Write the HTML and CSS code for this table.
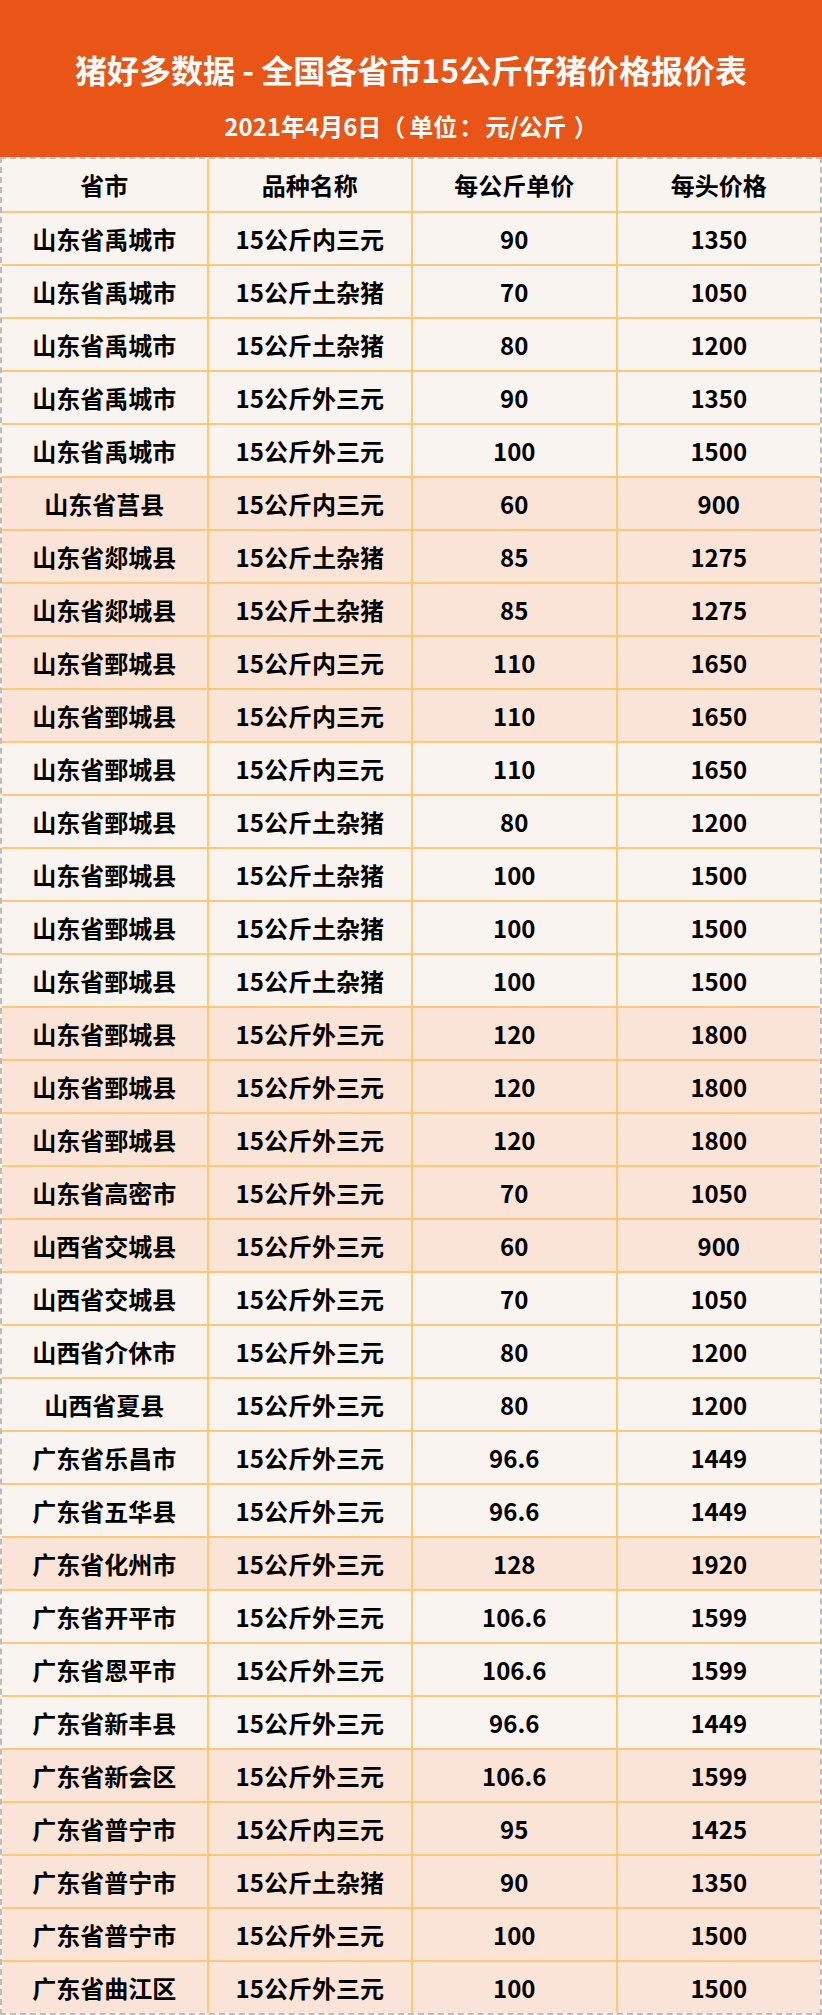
FILE: index.html
```html
<!DOCTYPE html>
<html lang="zh-CN">
<head>
<meta charset="utf-8">
<title>猪好多数据 - 全国各省市15公斤仔猪价格报价表</title>
<link rel="stylesheet" href="styles.css">
</head>
<body>
<div class="page">
  <header class="banner">
    <h1 class="title">猪好多数据 - 全国各省市15公斤仔猪价格报价表</h1>
    <p class="subtitle">2021年4月6日<span class="p-open">（</span>单位<span class="p-colon">：</span>元/公斤<span class="p-close">）</span></p>
  </header>
  <div class="table">
    <div class="row head"><div class="cell">省市</div><div class="cell">品种名称</div><div class="cell">每公斤单价</div><div class="cell">每头价格</div></div>
    <div class="row"><div class="cell">山东省禹城市</div><div class="cell">15公斤内三元</div><div class="cell">90</div><div class="cell">1350</div></div>
    <div class="row"><div class="cell">山东省禹城市</div><div class="cell">15公斤土杂猪</div><div class="cell">70</div><div class="cell">1050</div></div>
    <div class="row"><div class="cell">山东省禹城市</div><div class="cell">15公斤土杂猪</div><div class="cell">80</div><div class="cell">1200</div></div>
    <div class="row"><div class="cell">山东省禹城市</div><div class="cell">15公斤外三元</div><div class="cell">90</div><div class="cell">1350</div></div>
    <div class="row"><div class="cell">山东省禹城市</div><div class="cell">15公斤外三元</div><div class="cell">100</div><div class="cell">1500</div></div>
    <div class="row hl"><div class="cell">山东省莒县</div><div class="cell">15公斤内三元</div><div class="cell">60</div><div class="cell">900</div></div>
    <div class="row hl"><div class="cell">山东省郯城县</div><div class="cell">15公斤土杂猪</div><div class="cell">85</div><div class="cell">1275</div></div>
    <div class="row hl"><div class="cell">山东省郯城县</div><div class="cell">15公斤土杂猪</div><div class="cell">85</div><div class="cell">1275</div></div>
    <div class="row hl"><div class="cell">山东省鄄城县</div><div class="cell">15公斤内三元</div><div class="cell">110</div><div class="cell">1650</div></div>
    <div class="row hl"><div class="cell">山东省鄄城县</div><div class="cell">15公斤内三元</div><div class="cell">110</div><div class="cell">1650</div></div>
    <div class="row"><div class="cell">山东省鄄城县</div><div class="cell">15公斤内三元</div><div class="cell">110</div><div class="cell">1650</div></div>
    <div class="row"><div class="cell">山东省鄄城县</div><div class="cell">15公斤土杂猪</div><div class="cell">80</div><div class="cell">1200</div></div>
    <div class="row"><div class="cell">山东省鄄城县</div><div class="cell">15公斤土杂猪</div><div class="cell">100</div><div class="cell">1500</div></div>
    <div class="row"><div class="cell">山东省鄄城县</div><div class="cell">15公斤土杂猪</div><div class="cell">100</div><div class="cell">1500</div></div>
    <div class="row"><div class="cell">山东省鄄城县</div><div class="cell">15公斤土杂猪</div><div class="cell">100</div><div class="cell">1500</div></div>
    <div class="row hl"><div class="cell">山东省鄄城县</div><div class="cell">15公斤外三元</div><div class="cell">120</div><div class="cell">1800</div></div>
    <div class="row hl"><div class="cell">山东省鄄城县</div><div class="cell">15公斤外三元</div><div class="cell">120</div><div class="cell">1800</div></div>
    <div class="row hl"><div class="cell">山东省鄄城县</div><div class="cell">15公斤外三元</div><div class="cell">120</div><div class="cell">1800</div></div>
    <div class="row hl"><div class="cell">山东省高密市</div><div class="cell">15公斤外三元</div><div class="cell">70</div><div class="cell">1050</div></div>
    <div class="row hl"><div class="cell">山西省交城县</div><div class="cell">15公斤外三元</div><div class="cell">60</div><div class="cell">900</div></div>
    <div class="row"><div class="cell">山西省交城县</div><div class="cell">15公斤外三元</div><div class="cell">70</div><div class="cell">1050</div></div>
    <div class="row"><div class="cell">山西省介休市</div><div class="cell">15公斤外三元</div><div class="cell">80</div><div class="cell">1200</div></div>
    <div class="row"><div class="cell">山西省夏县</div><div class="cell">15公斤外三元</div><div class="cell">80</div><div class="cell">1200</div></div>
    <div class="row"><div class="cell">广东省乐昌市</div><div class="cell">15公斤外三元</div><div class="cell">96.6</div><div class="cell">1449</div></div>
    <div class="row"><div class="cell">广东省五华县</div><div class="cell">15公斤外三元</div><div class="cell">96.6</div><div class="cell">1449</div></div>
    <div class="row hl"><div class="cell">广东省化州市</div><div class="cell">15公斤外三元</div><div class="cell">128</div><div class="cell">1920</div></div>
    <div class="row"><div class="cell">广东省开平市</div><div class="cell">15公斤外三元</div><div class="cell">106.6</div><div class="cell">1599</div></div>
    <div class="row"><div class="cell">广东省恩平市</div><div class="cell">15公斤外三元</div><div class="cell">106.6</div><div class="cell">1599</div></div>
    <div class="row"><div class="cell">广东省新丰县</div><div class="cell">15公斤外三元</div><div class="cell">96.6</div><div class="cell">1449</div></div>
    <div class="row hl"><div class="cell">广东省新会区</div><div class="cell">15公斤外三元</div><div class="cell">106.6</div><div class="cell">1599</div></div>
    <div class="row hl"><div class="cell">广东省普宁市</div><div class="cell">15公斤内三元</div><div class="cell">95</div><div class="cell">1425</div></div>
    <div class="row hl"><div class="cell">广东省普宁市</div><div class="cell">15公斤土杂猪</div><div class="cell">90</div><div class="cell">1350</div></div>
    <div class="row hl"><div class="cell">广东省普宁市</div><div class="cell">15公斤外三元</div><div class="cell">100</div><div class="cell">1500</div></div>
    <div class="row hl"><div class="cell">广东省曲江区</div><div class="cell">15公斤外三元</div><div class="cell">100</div><div class="cell">1500</div></div>
  </div>
</div>
</body>
</html>
```

FILE: styles.css
```css
* { box-sizing: border-box; }
html, body { margin: 0; padding: 0; background: #f9f4f0; }
body {
  font-family: "Noto Sans CJK SC", "Noto Sans", sans-serif;
  font-weight: 700;
  color: #000;
  text-spacing-trim: space-all;
}
.page { width: 822px; }
.banner {
  background: #e85516;
  height: 157px;
  display: flex;
  flex-direction: column;
  align-items: center;
  padding-top: 49px;
}
.title {
  margin: 0;
  font-size: 32px;
  line-height: 40px;
  font-weight: 700;
  color: #fff;
  white-space: nowrap;
}
.subtitle {
  margin: 22px 0 0;
  font-size: 24px;
  line-height: 30px;
  color: #fff;
  white-space: nowrap;
}
.p-open { margin: 0 4px 0 0; }
.p-colon { margin: 0 2px; }
.p-close { margin: 0 0 0 7px; }
.table {
  border: 2px dashed #bdbdbd;
}
.row {
  display: grid;
  grid-template-columns: repeat(4, 1fr);
  height: 53px;
  border-bottom: 2px solid #fec878;
  background: #f9f4f0;
}
.row.head { height: 54px; }
.row:last-child { border-bottom: none; height: 51px; }
.row.hl { background: #fae4d8; }
.cell {
  display: flex;
  align-items: center;
  justify-content: center;
  font-size: 24px;
  line-height: 1;
  white-space: nowrap;
}
.cell + .cell { border-left: 2px solid #fec878; }
```
